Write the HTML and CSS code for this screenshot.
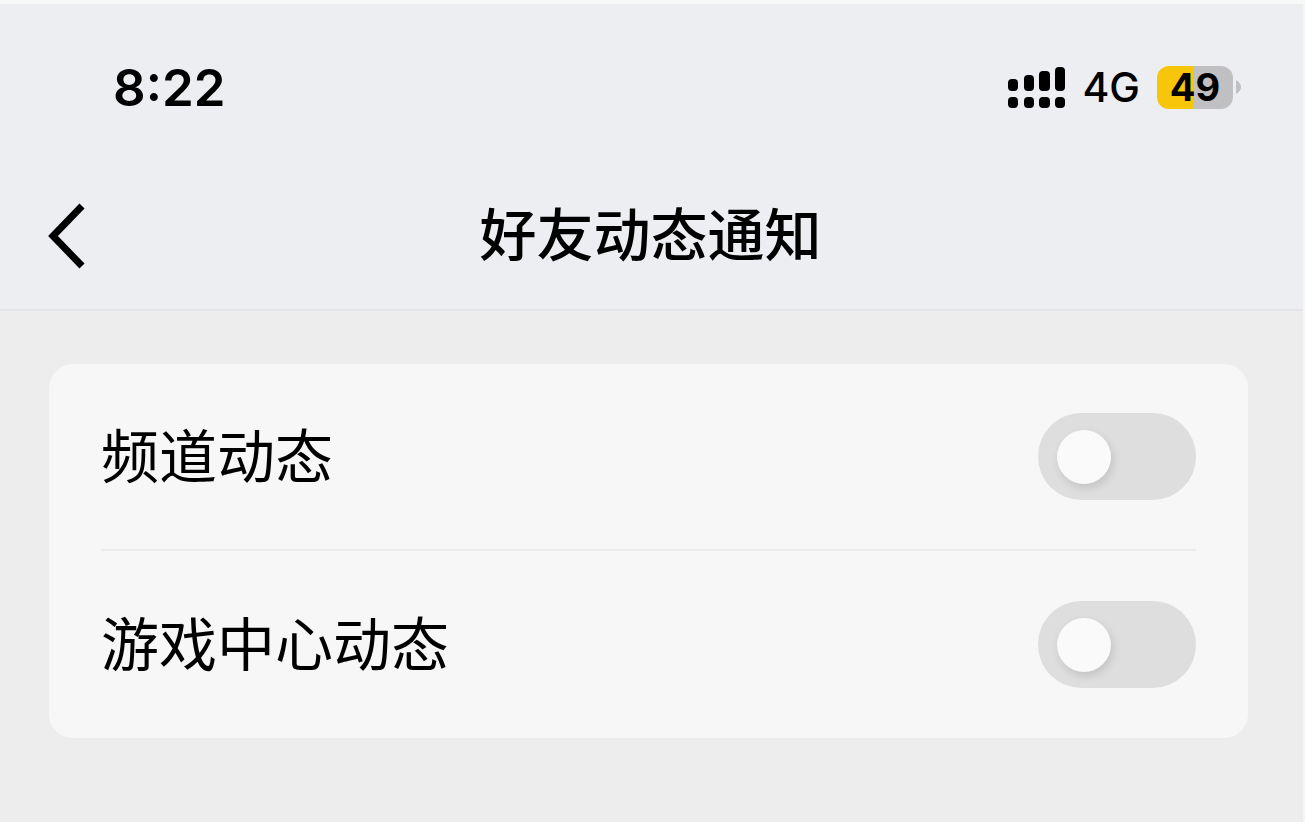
FILE: index.html
```html
<!DOCTYPE html>
<html lang="zh-CN">
<head>
    <meta charset="UTF-8">
    <meta name="viewport" content="width=device-width, initial-scale=1.0">
    <title>好友动态通知</title>
    <link rel="stylesheet" href="styles.css">
</head>
<body>
    <header class="header">
        <div class="status-bar">
            <span class="time">8:22</span>
            <div class="status-icons">
                <svg class="signal" width="58" height="42" viewBox="0 0 58 42">
                    <rect x="1" y="13" width="10" height="12" rx="4"/>
                    <rect x="17" y="9" width="10" height="16" rx="4"/>
                    <rect x="32" y="5" width="11" height="20" rx="4"/>
                    <rect x="48" y="1" width="10" height="24" rx="4"/>
                    <rect x="1" y="31" width="10" height="11" rx="4"/>
                    <rect x="17" y="31" width="10" height="11" rx="4"/>
                    <rect x="32" y="31" width="11" height="11" rx="4"/>
                    <rect x="48" y="31" width="10" height="11" rx="4"/>
                </svg>
                <span class="network">4G</span>
                <div class="battery">
                    <span class="battery-level">49</span>
                    <svg width="5" height="14" viewBox="0 0 5 14">
                        <path d="M0 0 Q5 3 5 7 Q5 11 0 14 Z" fill="#c0c0c2"/>
                    </svg>
                </div>
            </div>
        </div>
        <nav class="nav-bar">
            <button class="back" type="button" aria-label="返回">
                <svg width="40" height="68" viewBox="0 0 40 68">
                    <path d="M36 4 L7 34 L36 64" fill="none" stroke="#000" stroke-width="7"/>
                </svg>
            </button>
            <h1 class="title">好友动态通知</h1>
        </nav>
    </header>

    <main class="card">
        <div class="row">
            <label for="channel">频道动态</label>
            <input class="switch" type="checkbox" id="channel" name="channel">
        </div>
        <div class="row">
            <label for="game">游戏中心动态</label>
            <input class="switch" type="checkbox" id="game" name="game">
        </div>
    </main>
</body>
</html>
```
FILE: styles.css
```css
* {
    box-sizing: border-box;
}

body {
    margin: 0;
    min-height: 100vh;
    font-family: Inter, "Noto Sans CJK SC", sans-serif;
    background-color: #ededed;
    color: #000;
    border-top: 4px solid #f7f9f8;
    border-right: 2px solid #f5f5f7;
}

.header {
    background-color: #edeef2;
    border-bottom: 2px solid #e4e4e8;
}

.status-bar {
    display: flex;
    align-items: center;
    justify-content: space-between;
    height: 166px;
    padding: 0 62px 0 113px;
}

.time {
    font-size: 51px;
    font-weight: 600;
}

.status-icons {
    display: flex;
    align-items: center;
    gap: 17px;
}

.network {
    font-size: 41px;
    font-weight: 500;
}

.battery {
    display: flex;
    align-items: center;
    gap: 3px;
}

.battery-level {
    width: 76px;
    height: 43px;
    border-radius: 12px;
    background: linear-gradient(to right, #f7c60a 37px, #c0c0c2 37px);
    font-size: 38px;
    font-weight: 700;
    line-height: 43px;
    text-align: center;
}

.nav-bar {
    display: grid;
    grid-template-columns: 40px 1fr 40px;
    align-items: center;
    height: 139px;
    padding: 0 48px 8px 46px;
}

.back {
    display: flex;
    padding: 0;
    border: none;
    background: none;
    cursor: pointer;
}

.title {
    margin: 0;
    font-size: 57px;
    font-weight: 500;
    line-height: 80px;
    text-align: center;
}

.card {
    margin: 53px 55px 0 49px;
    padding: 0 52px;
    border-radius: 24px;
    background-color: #f7f7f7;
}

.row {
    display: flex;
    align-items: center;
    justify-content: space-between;
    height: 187px;
    font-size: 58px;
    line-height: 80px;
}

.row:first-child {
    border-bottom: 2px solid #ececec;
}

.switch {
    appearance: none;
    width: 158px;
    height: 87px;
    margin: 0;
    padding: 17px 19px;
    border-radius: 44px;
    background-color: #dedede;
    cursor: pointer;
}

.switch::before {
    content: "";
    display: block;
    width: 54px;
    height: 54px;
    border-radius: 50%;
    background-color: #fafafa;
    box-shadow: 2px 4px 8px rgba(0, 0, 0, 0.12);
}

.switch:checked {
    background-color: #0099ff;
}

.switch:checked::before {
    margin-left: auto;
}
```
